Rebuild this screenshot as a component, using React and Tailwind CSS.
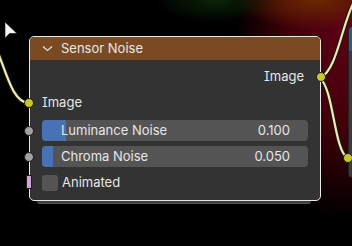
import React from "react";

const font = "font-['Inter','Liberation_Sans',sans-serif] [font-feature-settings:'cv08']";

const Socket = ({ side = "left", color = "bg-[#c7c729]" }) => (
  <span
    className={`absolute top-1/2 -translate-y-1/2 w-[10px] h-[10px] rounded-full border border-[#1e1e1e] ${color} ${
      side === "left" ? "left-[-6px]" : "right-[-6px]"
    }`}
  />
);

const Slider = ({ label, value, fill }) => (
  <div className="relative px-[12px] mt-[5px]">
    <Socket color="bg-[#a1a1a1]" />
    <div className="relative h-[21px] rounded-[4px] bg-[#545454] overflow-hidden flex items-center text-[13px] text-[#e6e6e6]">
      <div className="absolute left-0 top-0 bottom-0 bg-[#4772b3]" style={{ width: fill }} />
      <span className="relative pl-[19px]">{label}</span>
      <span className="relative ml-auto pr-[18px]">{value}</span>
    </div>
  </div>
);

const App = () => {
  return (
    <div className={`relative w-[352px] h-[246px] overflow-hidden bg-black ${font}`}>
      {/* viewport backdrop */}
      <div className="absolute inset-0 bg-[radial-gradient(ellipse_60px_22px_at_215px_0px,#0b2408,transparent),radial-gradient(ellipse_80px_30px_at_315px_0px,#6a2800,transparent),radial-gradient(ellipse_110px_190px_at_345px_30px,#5c0014_0%,#420009_50%,transparent_100%)]" />

      {/* wires */}
      <svg className="absolute inset-0" width="352" height="246" viewBox="0 0 352 246">
        <g fill="none" strokeLinecap="round">
          <path d="M-4 48 C 6 70, 12 103, 29 103" stroke="#1a1a10" strokeWidth="4" />
          <path d="M-4 48 C 6 70, 12 103, 29 103" stroke="#ecebb2" strokeWidth="2.2" />
          <path d="M320 78 C 338 70, 342 20, 356 -2" stroke="#1a1a10" strokeWidth="4" />
          <path d="M320 78 C 338 70, 342 20, 356 -2" stroke="#ecebb2" strokeWidth="2.2" />
          <path d="M320 78 C 334 90, 334 152, 348 158" stroke="#1a1a10" strokeWidth="4" />
          <path d="M320 78 C 334 90, 334 152, 348 158" stroke="#ecebb2" strokeWidth="2.2" />
        </g>
      </svg>

      {/* node to the right, mostly off screen */}
      <div className="absolute left-[348px] top-[26px] w-[30px] h-[152px] rounded-[4px] overflow-hidden border border-[#222] flex flex-col">
        <div className="h-[24px] bg-[#2f5b80]" />
        <div className="flex-1 bg-[#3a3a3a]" />
      </div>
      <span className="absolute left-[343px] top-[153px] w-[10px] h-[10px] rounded-full border border-[#1e1e1e] bg-[#c7c729]" />

      {/* cursor */}
      <svg className="absolute left-0 top-0" width="24" height="42" viewBox="0 0 24 42">
        <polygon points="5,22 5,38 9.5,33.5 17,33.5" fill="#f4f4f4" stroke="#111" strokeWidth="0.6" />
      </svg>

      {/* stacked shadow */}
      <div className="absolute left-[37px] top-[199px] w-[274px] h-[5px] rounded-b-[3px] bg-[#3d3d3d] border-b border-[#555]" />

      {/* Sensor Noise node */}
      <div className="absolute left-[29px] top-[36px] w-[292px] h-[165px] rounded-[5px] border border-[#e8e8e8] bg-[#333333] flex flex-col">
        <div className="h-[23px] rounded-t-[4px] bg-[#7a4a22] flex items-center text-[13px] text-[#e8e8e8]">
          <svg className="ml-[12px] mr-[8px]" width="11" height="7" viewBox="0 0 11 7">
            <path d="M1 1.5 L5.5 5.5 L10 1.5" fill="none" stroke="#e8e8e8" strokeWidth="1.1" />
          </svg>
          <span>Sensor Noise</span>
        </div>

        <div className="pt-[6px] flex flex-col text-[13px] text-[#e6e6e6]">
          <div className="relative h-[22px] flex items-center justify-end pr-[16px]">
            Image
            <Socket side="right" />
          </div>
          <div className="relative h-[24px] mt-[3px] flex items-center pl-[12px]">
            Image
            <Socket />
          </div>
          <Slider label="Luminance Noise" value="0.100" fill="24px" />
          <Slider label="Chroma Noise" value="0.050" fill="11px" />
          <div className="relative h-[18px] mt-[7px] flex items-center pl-[12px] gap-[4px]">
            <span className="absolute left-[-4px] top-[1px] w-[6px] h-[14px] bg-[#cca6d6] border border-[#1e1e1e]" />
            <span className="w-[16px] h-[16px] rounded-[3px] bg-[#545454]" />
            <span>Animated</span>
          </div>
        </div>
      </div>
    </div>
  );
};

export default App;
